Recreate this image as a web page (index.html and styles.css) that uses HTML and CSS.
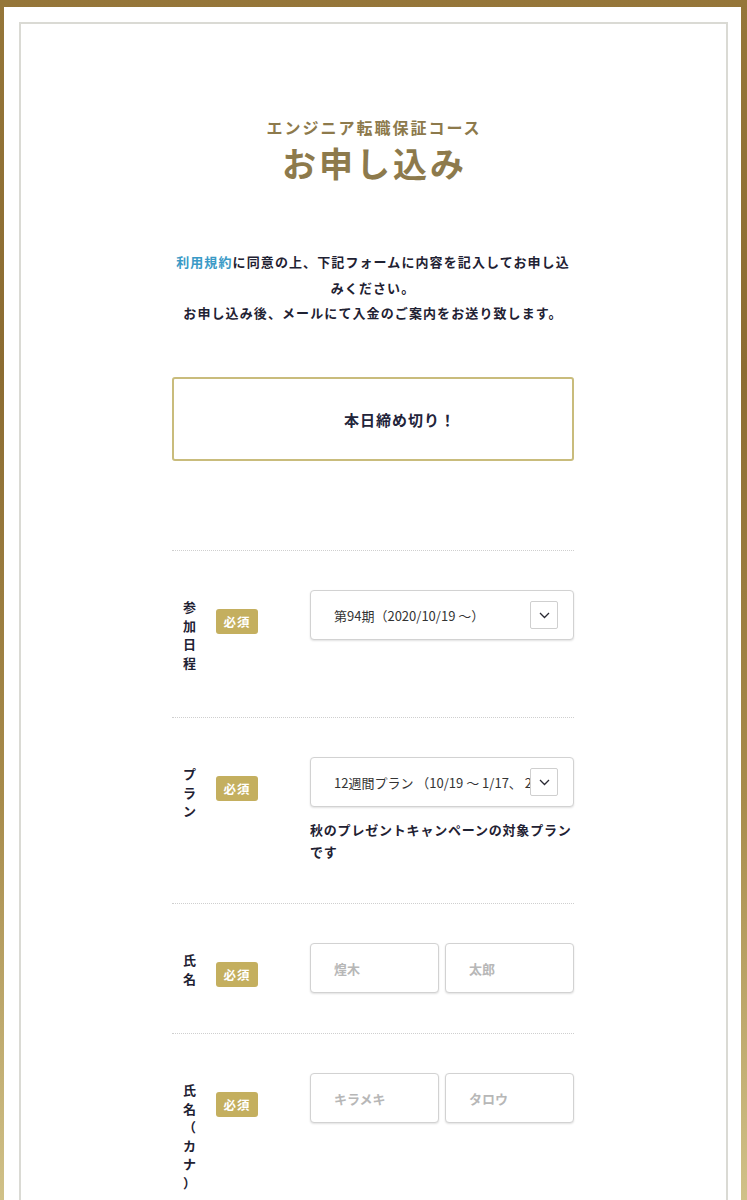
FILE: index.html
```html
<!DOCTYPE html>
<html lang="ja">
<head>
<meta charset="utf-8">
<title>お申し込み</title>
<link rel="stylesheet" href="styles.css">
</head>
<body>
<div class="sheet">
  <div class="inner">
    <div class="content">
      <header class="heading">
        <p class="sub">エンジニア転職保証コース</p>
        <h1 class="title">お申し込み</h1>
      </header>
      <p class="intro"><a class="link" href="#">利用規約</a>に同意の上、下記フォームに内容を記入してお申し込みください。<br>お申し込み後、メールにて入金のご案内をお送り致します。</p>
      <div class="notice">本日締め切り！</div>
      <form class="form">
        <div class="row">
          <div class="label">参加日程</div>
          <span class="badge">必須</span>
          <div class="field">
            <div class="select">
              <span class="select-text">第94期（2020/10/19 〜）</span>
              <span class="arrow"><svg width="11" height="7" viewBox="0 0 11 7"><path d="M1 1 L5.5 5.5 L10 1" fill="none" stroke="#2a2a33" stroke-width="1.3"/></svg></span>
            </div>
          </div>
        </div>
        <div class="row">
          <div class="label">プラン</div>
          <span class="badge">必須</span>
          <div class="field">
            <div class="select">
              <span class="select-text">12週間プラン （10/19 〜 1/17、 298,000円）</span>
              <span class="arrow"><svg width="11" height="7" viewBox="0 0 11 7"><path d="M1 1 L5.5 5.5 L10 1" fill="none" stroke="#2a2a33" stroke-width="1.3"/></svg></span>
            </div>
            <p class="note">秋のプレゼントキャンペーンの対象プランです</p>
          </div>
        </div>
        <div class="row">
          <div class="label">氏名</div>
          <span class="badge">必須</span>
          <div class="field pair">
            <input class="input" type="text" placeholder="煌木">
            <input class="input" type="text" placeholder="太郎">
          </div>
        </div>
        <div class="row">
          <div class="label">氏名（カナ）</div>
          <span class="badge">必須</span>
          <div class="field pair">
            <input class="input" type="text" placeholder="キラメキ">
            <input class="input" type="text" placeholder="タロウ">
          </div>
        </div>
      </form>
    </div>
  </div>
</div>
</body>
</html>
```
FILE: styles.css
```css
* { box-sizing: border-box; }
html, body { margin: 0; }
body {
  min-height: 1200px;
  padding: 7px 6px 0 4px;
  background: linear-gradient(to bottom, #957639 0%, #8c6c32 30%, #a88c4c 65%, #d4c68e 100%);
  font-family: "Noto Sans CJK JP", "Noto Sans", sans-serif;
  color: #1f2233;
}
.sheet {
  background: #fff;
  padding: 15px 13px 0 15px;
  min-height: 1193px;
}
.inner {
  border: 2px solid #dadad4;
  border-bottom: none;
  min-height: 1178px;
}
.content {
  width: 402px;
  margin: 0 0 0 151px;
  padding-top: 91px;
}
.heading { text-align: center; color: #8d7a4c; }
.sub {
  margin: 0;
  font-size: 16px;
  line-height: 24px;
  font-weight: 700;
  letter-spacing: 2px;
  padding-left: 2px;
}
.title {
  margin: 4px 0 0;
  font-size: 34px;
  line-height: 40px;
  font-weight: 700;
  letter-spacing: 3px;
  padding-left: 3px;
}
.intro {
  margin: 66px 0 0;
  text-align: center;
  font-size: 13px;
  line-height: 25.5px;
  font-weight: 700;
  letter-spacing: 1.1px;
}
.link { color: #3a9ac6; text-decoration: none; }
.notice {
  margin-top: 51.5px;
  height: 84px;
  border: 2px solid #c9bc7c;
  border-radius: 3px;
  display: flex;
  align-items: center;
  justify-content: center;
  padding-left: 54px;
  font-size: 15px;
  font-weight: 700;
  letter-spacing: 1px;
  color: #22243a;
}
.form { margin-top: 89px; }
.row {
  display: flex;
  align-items: flex-start;
  border-top: 1px dotted #cfcfcf;
  padding: 39px 0 40px;
}
.label {
  width: 13px;
  margin-left: 11px;
  padding: 8px 0 5px;
  font-size: 13px;
  line-height: 18.5px;
  font-weight: 700;
  word-break: break-all;
  line-break: anywhere;
  color: #1f2233;
}
.badge {
  margin: 19px 0 0 20px;
  width: 42px;
  height: 25px;
  border-radius: 3px;
  background: #c4af5f;
  color: #fff;
  font-size: 12.5px;
  font-weight: 700;
  line-height: 25px;
  text-align: center;
  letter-spacing: 1px;
}
.field {
  margin-left: auto;
  width: 264px;
}
.select {
  position: relative;
  height: 50px;
  border: 1px solid #d2d2d2;
  border-radius: 4px;
  box-shadow: 0 1px 2px rgba(0,0,0,0.12);
  background: #fff;
  display: flex;
  align-items: center;
  padding: 0 42px 0 23px;
  font-size: 13px;
  color: #333;
}
.select-text {
  flex: 1;
  overflow: hidden;
  white-space: nowrap;
}
.arrow {
  position: absolute;
  right: 15px;
  top: 10px;
  width: 28px;
  height: 28px;
  border: 1px solid #cfcfcf;
  border-radius: 2px;
  background: #fff;
  display: flex;
  align-items: center;
  justify-content: center;
}
.note {
  margin: 12px 0 0;
  font-size: 13px;
  line-height: 22px;
  font-weight: 700;
  letter-spacing: 0.8px;
  color: #1f2233;
}
.pair {
  display: flex;
  gap: 6px;
}
.input {
  width: 129px;
  height: 50px;
  border: 1px solid #d2d2d2;
  border-radius: 4px;
  box-shadow: 0 1px 2px rgba(0,0,0,0.12);
  padding: 0 0 0 23px;
  font-family: inherit;
  font-size: 13px;
  font-weight: 700;
  color: #333;
  background: #fff;
  outline: none;
}
.input::placeholder { color: #b7b7b7; }
```
